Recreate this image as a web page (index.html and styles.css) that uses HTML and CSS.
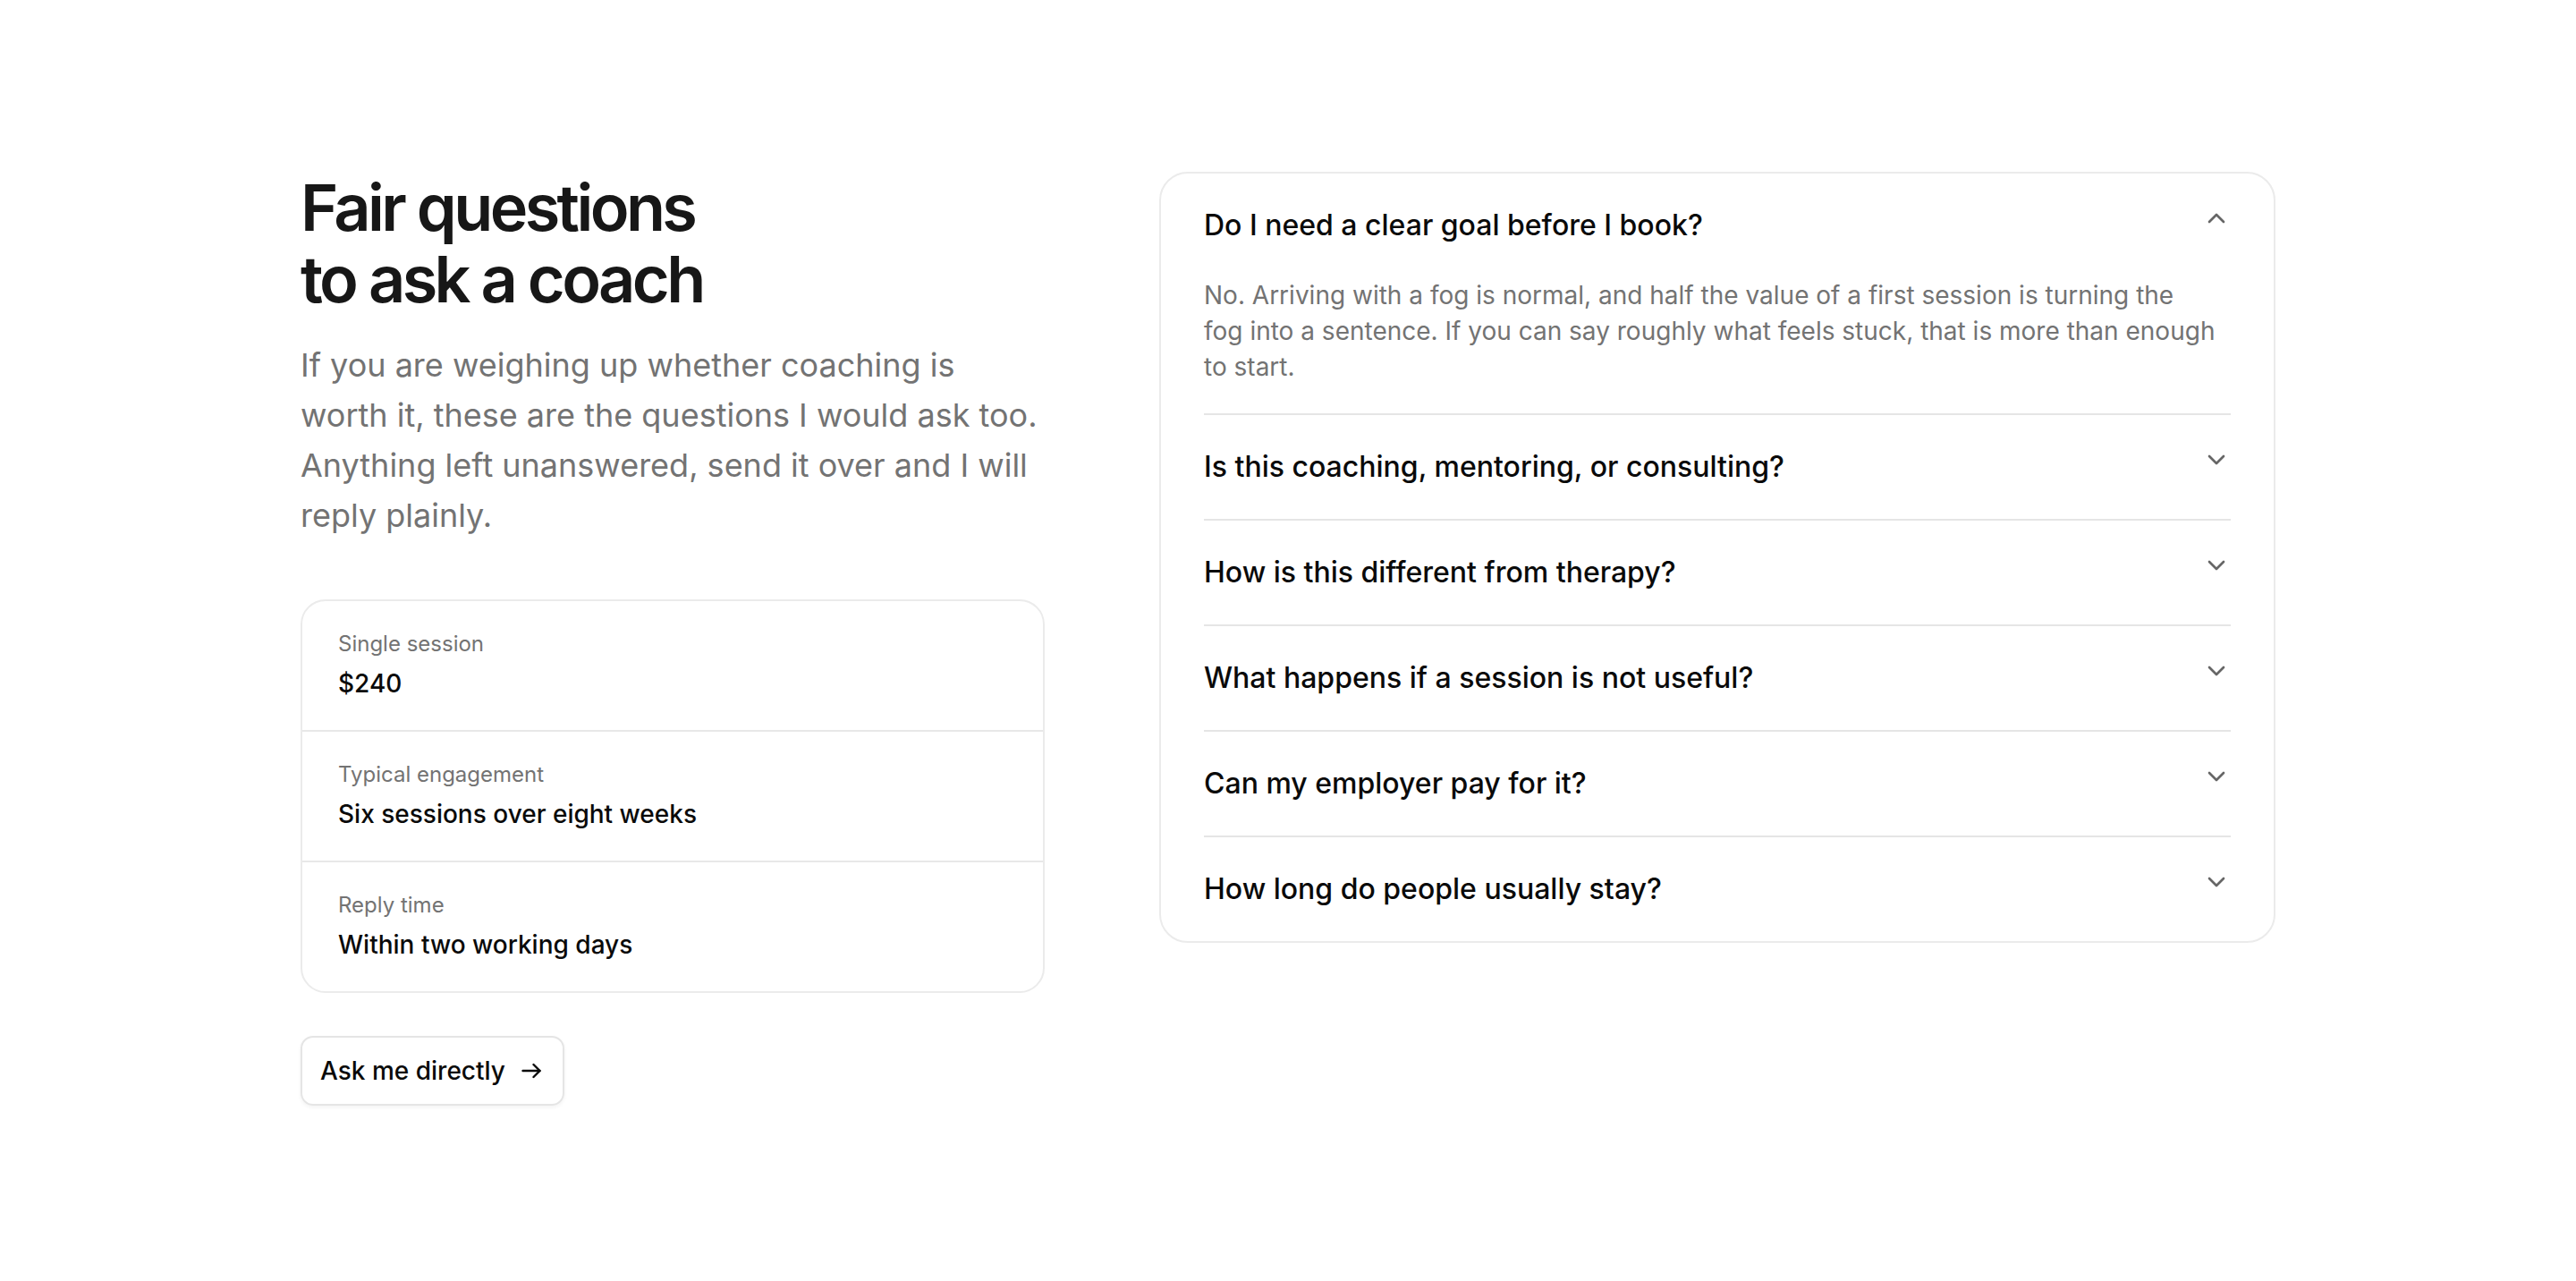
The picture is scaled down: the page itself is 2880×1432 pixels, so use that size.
FILE: index.html
```html
<!DOCTYPE html>
<html lang="en">
<head>
    <meta charset="UTF-8">
    <meta name="viewport" content="width=device-width, initial-scale=1.0">
    <title>Fair questions to ask a coach</title>
    <link rel="stylesheet" href="styles.css">
</head>
<body>

    <main class="page">

        <!-- Coluna da esquerda -->
        <section class="intro">
            <h1>Fair questions<br>to ask a coach</h1>
            <p class="lead">If you are weighing up whether coaching is worth it, these are the questions I would ask too. Anything left unanswered, send it over and I will reply plainly.</p>

            <div class="facts">
                <div class="fact">
                    <div class="fact-label">Single session</div>
                    <div class="fact-value">$240</div>
                </div>
                <div class="fact">
                    <div class="fact-label">Typical engagement</div>
                    <div class="fact-value">Six sessions over eight weeks</div>
                </div>
                <div class="fact">
                    <div class="fact-label">Reply time</div>
                    <div class="fact-value">Within two working days</div>
                </div>
            </div>

            <a href="#" class="ask">
                Ask me directly
                <svg width="22" height="18" viewBox="0 0 22 18" fill="none" stroke="currentColor" stroke-width="2.4" stroke-linecap="round" stroke-linejoin="round"><path d="M1.5 9h19"/><path d="M13.5 2l7 7-7 7"/></svg>
            </a>
        </section>

        <!-- Perguntas -->
        <section class="faq">
            <div class="faq-item open">
                <button class="faq-q">
                    <span>Do I need a clear goal before I book?</span>
                    <svg class="chev" viewBox="0 0 24 24"><path d="m18 15-6-6-6 6"/></svg>
                </button>
                <p class="faq-a">No. Arriving with a fog is normal, and half the value of a first session is turning the fog into a sentence. If you can say roughly what feels stuck, that is more than enough to start.</p>
            </div>
            <div class="faq-item">
                <button class="faq-q">
                    <span>Is this coaching, mentoring, or consulting?</span>
                    <svg class="chev" viewBox="0 0 24 24"><path d="m6 9 6 6 6-6"/></svg>
                </button>
            </div>
            <div class="faq-item">
                <button class="faq-q">
                    <span>How is this different from therapy?</span>
                    <svg class="chev" viewBox="0 0 24 24"><path d="m6 9 6 6 6-6"/></svg>
                </button>
            </div>
            <div class="faq-item">
                <button class="faq-q">
                    <span>What happens if a session is not useful?</span>
                    <svg class="chev" viewBox="0 0 24 24"><path d="m6 9 6 6 6-6"/></svg>
                </button>
            </div>
            <div class="faq-item">
                <button class="faq-q">
                    <span>Can my employer pay for it?</span>
                    <svg class="chev" viewBox="0 0 24 24"><path d="m6 9 6 6 6-6"/></svg>
                </button>
            </div>
            <div class="faq-item">
                <button class="faq-q">
                    <span>How long do people usually stay?</span>
                    <svg class="chev" viewBox="0 0 24 24"><path d="m6 9 6 6 6-6"/></svg>
                </button>
            </div>
        </section>

    </main>

</body>
</html>
```

FILE: styles.css
```css
body {
    font-family: 'Inter', 'Noto Sans', sans-serif;
    margin: 0;
    background: #fff;
    color: #0a0a0a;
}

.page {
    max-width: 2208px;
    margin: 0 auto;
    padding: 192px 0;
    display: grid;
    grid-template-columns: 2fr 3fr;
    gap: 128px;
    align-items: start;
}

h1 {
    margin: 0;
    font-size: 72px;
    line-height: 80px;
    font-weight: 600;
    letter-spacing: -0.05em;
    color: #171717;
}

.lead {
    margin: 28px 0 0;
    font-size: 36px;
    line-height: 56px;
    color: #737373;
}

.facts {
    margin-top: 66px;
    border: 2px solid #ebebeb;
    border-radius: 28px;
}

.fact {
    padding: 32px 40px;
    border-bottom: 2px solid #e8e8e8;
}

.fact:last-child {
    border-bottom: none;
}

.fact-label {
    font-size: 24px;
    line-height: 32px;
    color: #737373;
}

.fact-value {
    margin-top: 8px;
    font-size: 28px;
    line-height: 40px;
    font-weight: 500;
}

.ask {
    margin-top: 48px;
    display: inline-flex;
    align-items: center;
    gap: 18px;
    height: 78px;
    box-sizing: border-box;
    padding: 0 24px 0 20px;
    border: 2px solid #e5e5e5;
    border-radius: 14px;
    box-shadow: 0 2px 4px rgba(0,0,0,0.05);
    font-size: 28px;
    font-weight: 500;
    color: #0a0a0a;
    text-decoration: none;
}

.faq {
    border: 2px solid #ebebeb;
    border-radius: 32px;
    padding: 0 48px;
}

.faq-item {
    border-bottom: 2px solid #e5e5e5;
}

.faq-item:last-child {
    border-bottom: none;
}

.faq-q {
    width: 100%;
    display: flex;
    justify-content: space-between;
    align-items: flex-start;
    gap: 32px;
    padding: 32px 0;
    border: none;
    background: none;
    font-family: inherit;
    font-size: 32px;
    line-height: 52px;
    font-weight: 500;
    color: #0a0a0a;
    text-align: left;
    cursor: pointer;
}

.chev {
    width: 32px;
    height: 32px;
    margin-top: 2px;
    flex-shrink: 0;
    fill: none;
    stroke: #666;
    stroke-width: 2;
    stroke-linecap: round;
    stroke-linejoin: round;
}

.faq-a {
    margin: 0;
    padding: 0 17px 32px 0;
    font-size: 28px;
    line-height: 40px;
    color: #737373;
}
```
